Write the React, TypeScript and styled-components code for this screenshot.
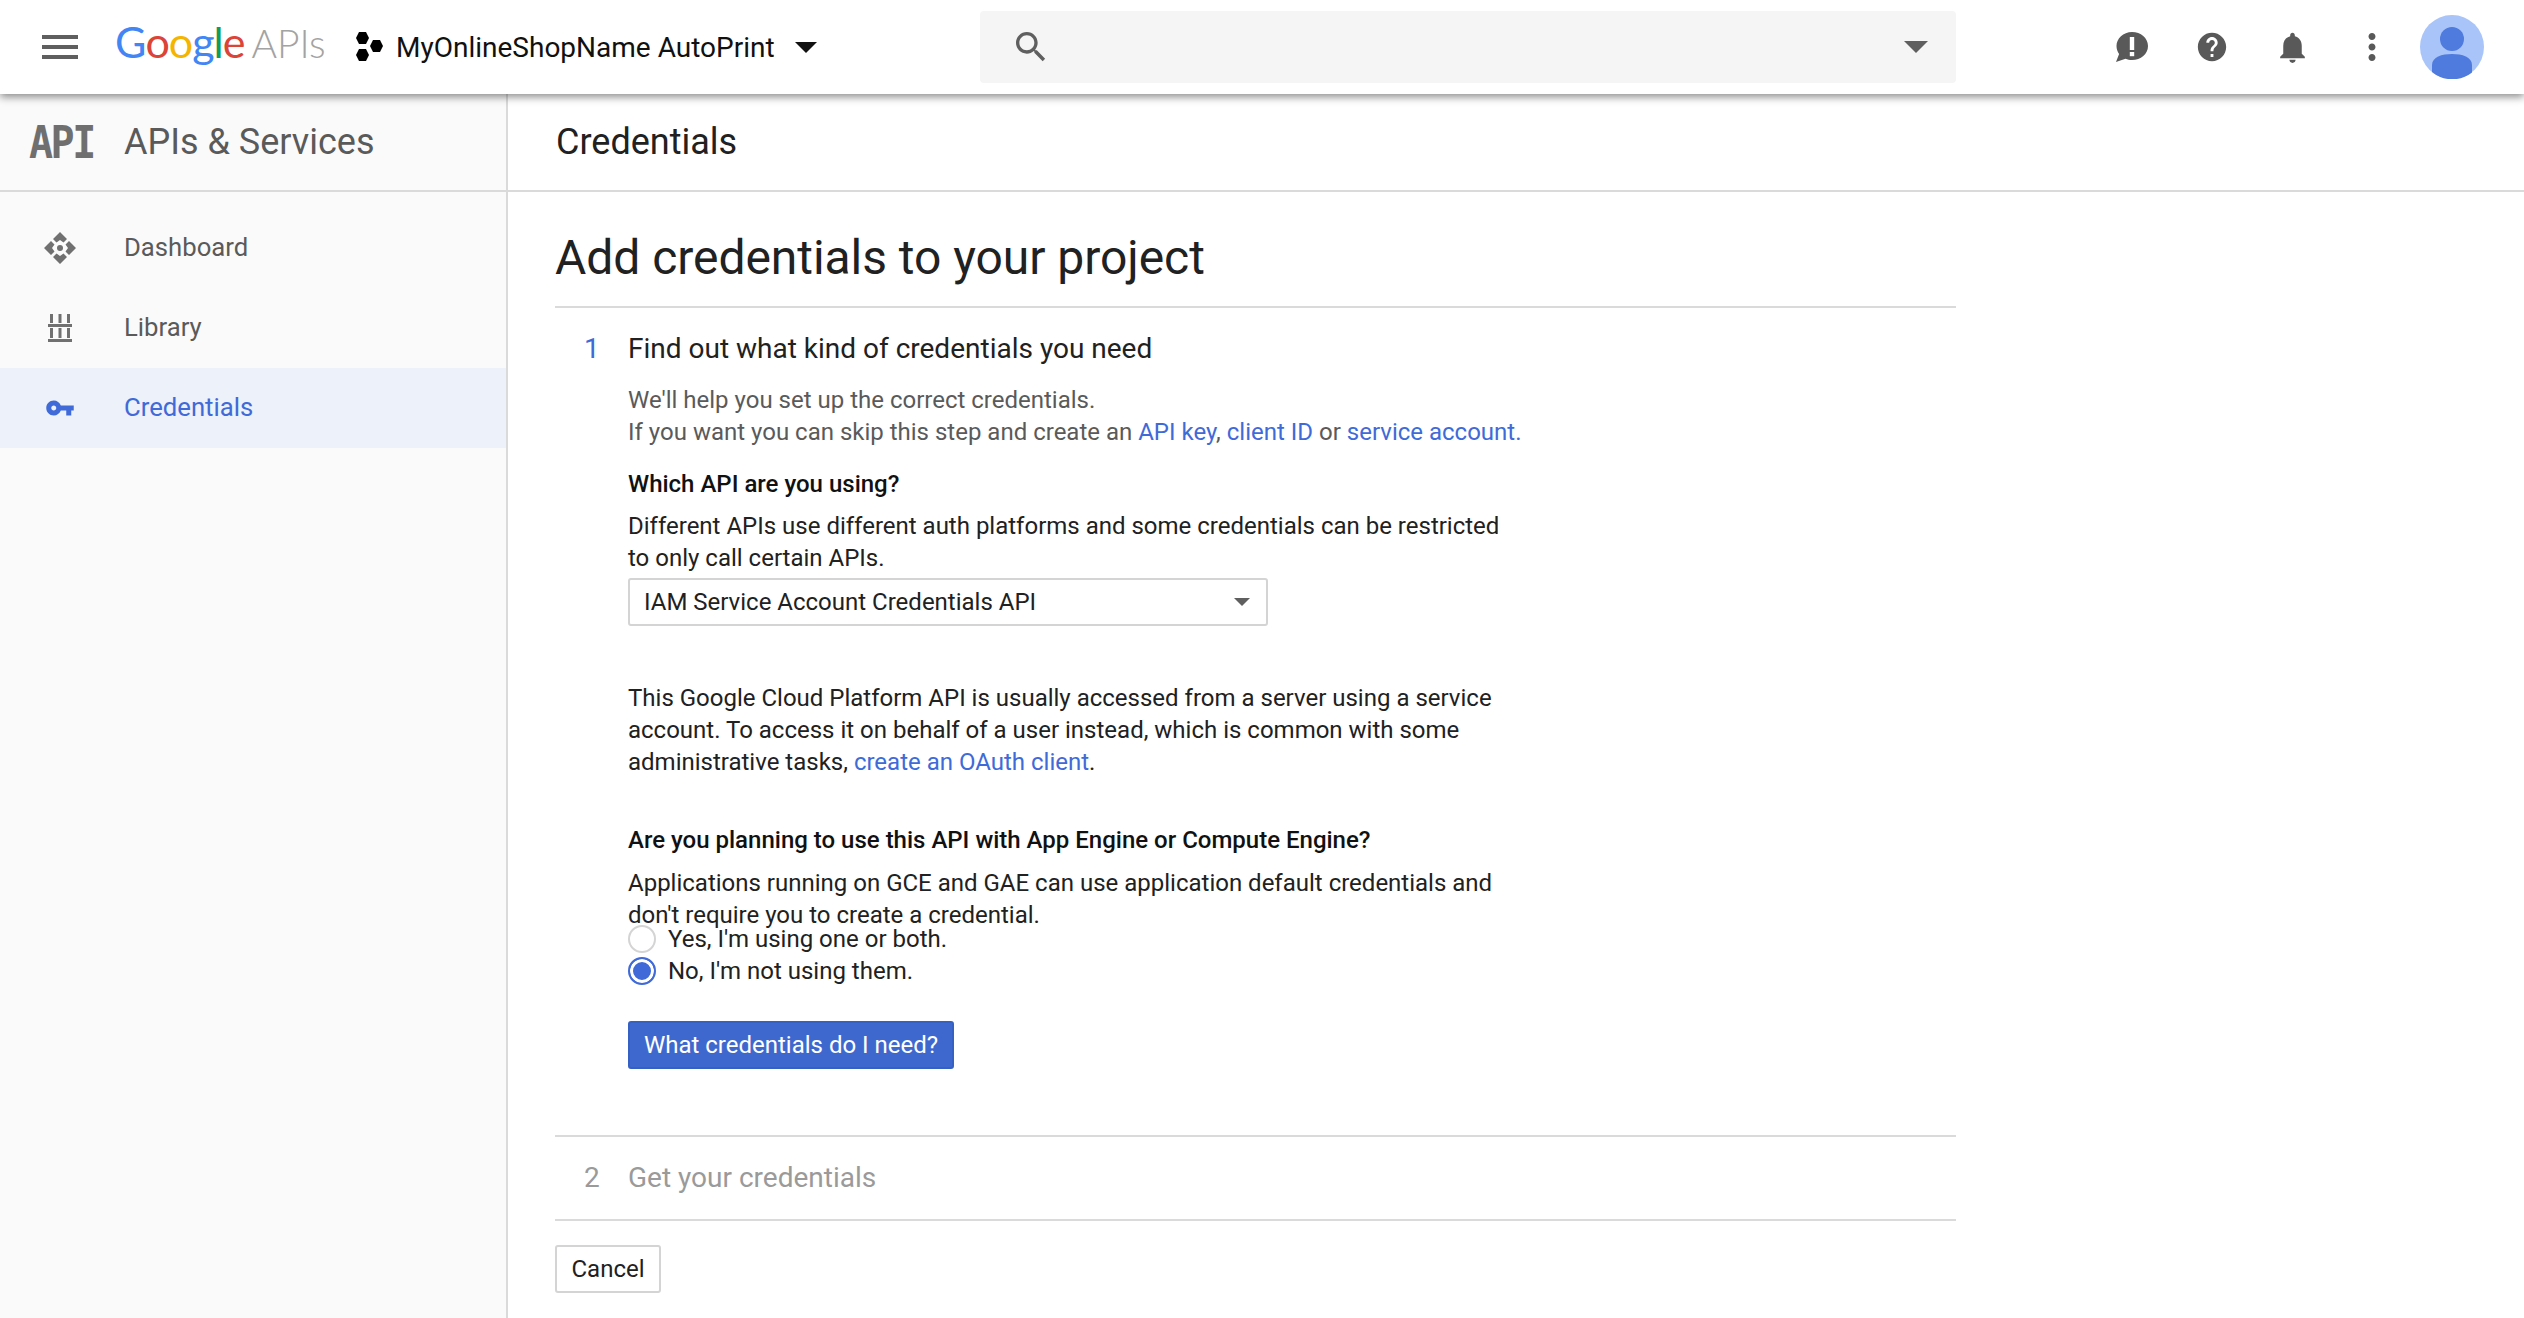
import React from 'react';
import styled, { createGlobalStyle } from 'styled-components';

const GlobalStyle = createGlobalStyle`
  html, body {
    margin: 0;
    padding: 0;
    background: #fff;
  }
  body {
    font-family: Roboto, "Liberation Sans", sans-serif;
    color: #212121;
    overflow: hidden;
  }
`;

const Page = styled.div`
  width: 2524px;
  height: 1318px;
  overflow: hidden;
  display: flex;
  flex-direction: column;
`;

const Header = styled.header`
  position: relative;
  z-index: 2;
  height: 94px;
  flex: none;
  display: flex;
  align-items: center;
  background: #fff;
  box-shadow: 0 3px 8px rgba(0, 0, 0, 0.45);
`;

const MenuButton = styled.div`
  width: 48px;
  height: 48px;
  margin-left: 36px;
  display: flex;
  color: #5f5f5f;
`;

const Logo = styled.div`
  margin-left: 31px;
  width: 229px;
  display: flex;
  align-items: baseline;
  font-family: Lato, "Open Sans", sans-serif;
  font-size: 43px;
  line-height: 60px;
  letter-spacing: -1px;
  margin-top: -10px;
`;

const LogoLetter = styled.span<{ $color: string }>`
  color: ${(p) => p.$color};
`;

const LogoApis = styled.span`
  margin-left: 7px;
  color: #a3a3a3;
  font-size: 39px;
  letter-spacing: 0;
  font-weight: 300;
`;

const ProjectIcon = styled.svg`
  margin-left: 11px;
  width: 28px;
  height: 30px;
  flex: none;
`;

const ProjectName = styled.div`
  margin-left: 13px;
  width: 399px;
  font-size: 28px;
  color: #111;
  white-space: nowrap;
`;

const Caret = styled.div<{ $size: number; $color: string }>`
  width: 0;
  height: 0;
  flex: none;
  border-left: ${(p) => p.$size}px solid transparent;
  border-right: ${(p) => p.$size}px solid transparent;
  border-top: ${(p) => p.$size}px solid ${(p) => p.$color};
`;

const Search = styled.div`
  margin-left: 163px;
  width: 976px;
  height: 72px;
  flex: none;
  box-sizing: border-box;
  padding: 0 28px 0 31px;
  display: flex;
  align-items: center;
  justify-content: space-between;
  background: #f5f5f5;
  border-radius: 4px;
  color: #5f5f5f;
`;

const ActionBar = styled.div`
  margin-left: 136px;
  display: flex;
  align-items: center;
  color: #595959;
`;

const ActionSlot = styled.div`
  width: 80px;
  height: 64px;
  display: flex;
  align-items: center;
  justify-content: center;
`;

const Avatar = styled.svg`
  margin-left: 8px;
  width: 64px;
  height: 64px;
  flex: none;
`;

const Body = styled.div`
  flex: 1;
  display: grid;
  grid-template-columns: 508px 1fr;
  min-height: 0;
`;

const Sidebar = styled.aside`
  background: #fafafa;
  border-right: 2px solid #dadada;
`;

const TitleBar = styled.div<{ $inset: number }>`
  height: 96px;
  display: flex;
  align-items: center;
  padding-left: ${(p) => p.$inset}px;
  border-bottom: 2px solid #dadada;
`;

const ApiMark = styled.span`
  width: 95px;
  font-family: "DejaVu Sans Mono", "Liberation Mono", monospace;
  font-weight: 700;
  font-size: 40px;
  letter-spacing: -2.5px;
  color: #6f6f6f;
  transform: scaleY(1.12);
  transform-origin: left center;
`;

const SidebarTitle = styled.div`
  font-size: 36px;
  color: #5a5a5a;
  white-space: nowrap;
`;

const PageTitle = styled.div`
  font-size: 36px;
  color: #212121;
`;

const NavList = styled.nav`
  padding-top: 16px;
`;

const NavItem = styled.div<{ $active?: boolean }>`
  height: 80px;
  display: flex;
  align-items: center;
  background: ${(p) => (p.$active ? '#ecf1fa' : 'transparent')};
  color: ${(p) => (p.$active ? '#3f6ad8' : '#5a5a5a')};
  font-size: 25.7px;
`;

const NavIcon = styled.div<{ $muted?: boolean }>`
  width: 124px;
  flex: none;
  display: flex;
  justify-content: center;
  padding-right: 4px;
  box-sizing: border-box;
  color: ${(p) => (p.$muted ? '#707070' : 'inherit')};
`;

const NavLabel = styled.span`
  margin-top: -2px;
`;

const Main = styled.main`
  min-width: 0;
`;

const Content = styled.div`
  margin-left: 47px;
  width: 1401px;
`;

const Heading = styled.h1`
  margin: 0;
  padding: 34px 0 16px;
  font-size: 48px;
  line-height: 64px;
  font-weight: 400;
  letter-spacing: -0.05px;
  color: #212121;
  border-bottom: 2px solid #dadada;
`;

const StepHeader = styled.div<{ $disabled?: boolean }>`
  display: flex;
  font-size: 28px;
  line-height: 42px;
  color: ${(p) => (p.$disabled ? '#9a9a9a' : '#212121')};
`;

const StepNumber = styled.span<{ $disabled?: boolean }>`
  width: 73px;
  box-sizing: border-box;
  padding-left: 29px;
  color: ${(p) => (p.$disabled ? '#9a9a9a' : '#3f6ad8')};
`;

const ActiveStep = styled.section`
  padding: 20px 0 66px;
  border-bottom: 2px solid #dadada;
`;

const PendingStep = styled.section`
  padding: 20px 0 20px;
  border-bottom: 2px solid #dadada;
`;

const StepBody = styled.div`
  padding-left: 73px;
  width: 960px;
`;

const Copy = styled.p<{ $top: number; $muted?: boolean }>`
  margin: ${(p) => p.$top}px 0 0;
  font-size: 24px;
  line-height: 32px;
  color: ${(p) => (p.$muted ? '#5a5a5a' : '#212121')};
`;

const Question = styled.p<{ $top: number }>`
  margin: ${(p) => p.$top}px 0 0;
  font-size: 24px;
  line-height: 32px;
  font-weight: 500;
  color: #111;
`;

const Link = styled.a`
  color: #3f6ad8;
  text-decoration: none;
`;

const Select = styled.div`
  margin-top: 4px;
  width: 640px;
  height: 48px;
  box-sizing: border-box;
  padding: 0 16px 0 14px;
  display: flex;
  align-items: center;
  justify-content: space-between;
  border: 2px solid #d4d4d4;
  border-radius: 3px;
  background: #fff;
  font-size: 24px;
  color: #212121;
`;

const RadioGroup = styled.div`
  margin-top: -8px;
`;

const RadioRow = styled.label`
  height: 32px;
  display: flex;
  align-items: center;
  font-size: 24px;
  color: #212121;
`;

const RadioMark = styled.span<{ $checked?: boolean }>`
  width: 28px;
  height: 28px;
  margin-right: 12px;
  flex: none;
  box-sizing: border-box;
  border-radius: 50%;
  border: 2px solid ${(p) => (p.$checked ? '#3f6ad8' : '#d4d4d4')};
  background: ${(p) => (p.$checked ? '#3f6ad8' : '#fff')};
  box-shadow: ${(p) => (p.$checked ? 'inset 0 0 0 3px #fff' : 'none')};
`;

const PrimaryButton = styled.button`
  display: block;
  margin-top: 34px;
  height: 48px;
  width: 326px;
  padding: 0;
  border: 2px solid #3560c4;
  border-radius: 3px;
  background: #3f68cf;
  color: #fff;
  font-family: inherit;
  font-size: 24px;
`;

const CancelButton = styled.button`
  display: block;
  margin-top: 24px;
  height: 48px;
  width: 106px;
  padding: 0;
  border: 2px solid #d4d4d4;
  border-radius: 3px;
  background: #fff;
  color: #212121;
  font-family: inherit;
  font-size: 24px;
`;

const googleLetters: [string, string][] = [
  ['G', '#4285f4'],
  ['o', '#db4437'],
  ['o', '#f4b400'],
  ['g', '#4285f4'],
  ['l', '#0f9d58'],
  ['e', '#db4437'],
];

function Icon({ d, size, color }: { d: string; size: number; color?: string }) {
  return (
    <svg width={size} height={size} viewBox="0 0 24 24" fill={color || 'currentColor'}>
      <path d={d} />
    </svg>
  );
}

const paths = {
  menu: 'M3 18h18v-2H3v2zm0-5h18v-2H3v2zm0-7v2h18V6H3z',
  search:
    'M15.5 14h-.79l-.28-.27C15.41 12.59 16 11.11 16 9.5 16 5.91 13.09 3 9.5 3S3 5.91 3 9.5 5.91 16 9.5 16c1.61 0 3.09-.59 4.23-1.57l.27.28v.79l5 4.99L20.49 19l-4.99-5zm-6 0C7.01 14 5 11.99 5 9.5S7.01 5 9.5 5 14 7.01 14 9.5 11.99 14 9.5 14z',
  help: 'M12 2C6.48 2 2 6.48 2 12s4.48 10 10 10 10-4.48 10-10S17.52 2 12 2zm1 17h-2v-2h2v2zm2.07-7.75l-.9.92C13.45 12.9 13 13.5 13 15h-2v-.5c0-1.1.45-2.1 1.17-2.83l1.24-1.26c.37-.36.59-.86.59-1.41 0-1.1-.9-2-2-2s-2 .9-2 2H8c0-2.21 1.79-4 4-4s4 1.79 4 4c0 .88-.36 1.68-.93 2.25z',
  bell: 'M12 22c1.1 0 2-.9 2-2h-4c0 1.1.89 2 2 2zm6-6v-5c0-3.07-1.64-5.64-4.5-6.32V4c0-.83-.67-1.5-1.5-1.5s-1.5.67-1.5 1.5v.68C7.63 5.36 6 7.92 6 11v5l-2 2v1h16v-1l-2-2z',
  more: 'M12 8c1.1 0 2-.9 2-2s-.9-2-2-2-2 .9-2 2 .9 2 2 2zm0 2c-1.1 0-2 .9-2 2s.9 2 2 2 2-.9 2-2-.9-2-2-2zm0 6c-1.1 0-2 .9-2 2s.9 2 2 2 2-.9 2-2-.9-2-2-2z',
  key: 'M12.65 10C11.83 7.67 9.61 6 7 6c-3.31 0-6 2.69-6 6s2.69 6 6 6c2.61 0 4.83-1.67 5.65-4H17v4h4v-4h2v-4H12.65zM7 14c-1.1 0-2-.9-2-2s.9-2 2-2 2 .9 2 2-.9 2-2 2z',
};

function FeedbackIcon() {
  return (
    <svg width="34" height="32" viewBox="0 0 34 32">
      <path
        fill="currentColor"
        d="M17 1C8.2 1 1.5 7.5 1.5 15c0 3 1 5.700 2.600 8L1 31l9.500-3.200c2 .9 4.200 1.200 6.500 1.200 8.800 0 16-6 16-14S25.800 1 17 1z"
      />
      <rect x="14.800" y="6" width="4.400" height="13" fill="#fff" />
      <rect x="14.800" y="21" width="4.400" height="4.200" fill="#fff" />
    </svg>
  );
}

function DashboardIcon() {
  return (
    <svg width="32" height="32" viewBox="0 0 32 32" fill="currentColor">
      <path d="M16 0l7 7-3.500 3.500L16 8l-3.500 2.500L9 7z" />
      <path d="M16 32l-7-7 3.500-3.500L16 24l3.500-2.500L23 25z" />
      <path d="M0 16l7-7 3.500 3.500L8 16l2.500 3.500L7 23z" />
      <path d="M32 16l-7 7-3.500-3.500L24 16l-2.500-3.500L25 9z" />
      <circle cx="16" cy="16" r="3" />
    </svg>
  );
}

function LibraryIcon() {
  return (
    <svg width="24" height="28" viewBox="0 0 24 28" fill="currentColor">
      <rect x="2" y="0" width="3" height="9" />
      <rect x="10.500" y="0" width="3" height="9" />
      <rect x="19" y="0" width="3" height="9" />
      <rect x="0" y="10" width="24" height="3" />
      <rect x="2" y="14" width="3" height="10" />
      <rect x="10.500" y="14" width="3" height="10" />
      <rect x="19" y="14" width="3" height="10" />
      <rect x="0" y="25" width="24" height="3" />
    </svg>
  );
}

export default function App() {
  return (
    <>
      <GlobalStyle />
      <Page>
        <Header>
          <MenuButton>
            <Icon d={paths.menu} size={48} />
          </MenuButton>
          <Logo>
            {googleLetters.map(([letter, color], i) => (
              <LogoLetter key={i} $color={color}>
                {letter}
              </LogoLetter>
            ))}
            <LogoApis>APIs</LogoApis>
          </Logo>
          <ProjectIcon viewBox="0 0 28 30" fill="#000">
            <polygon points="7,0 14,0 17,6 14,12 7,12 4,6" transform="translate(-3,0)" />
            <polygon points="7,0 14,0 17,6 14,12 7,12 4,6" transform="translate(11,8)" />
            <polygon points="7,0 14,0 17,6 14,12 7,12 4,6" transform="translate(-3,17)" />
          </ProjectIcon>
          <ProjectName>MyOnlineShopName AutoPrint</ProjectName>
          <Caret $size={11.5} $color="#111" />
          <Search>
            <Icon d={paths.search} size={40} />
            <Caret $size={12} $color="#5f5f5f" />
          </Search>
          <ActionBar>
            <ActionSlot>
              <FeedbackIcon />
            </ActionSlot>
            <ActionSlot>
              <Icon d={paths.help} size={34} />
            </ActionSlot>
            <ActionSlot>
              <Icon d={paths.bell} size={37} />
            </ActionSlot>
            <ActionSlot>
              <Icon d={paths.more} size={42} />
            </ActionSlot>
          </ActionBar>
          <Avatar viewBox="0 0 64 64">
            <circle cx="32" cy="32" r="32" fill="#a8c4f9" />
            <ellipse cx="32" cy="24" rx="12" ry="12" fill="#4f7ade" />
            <path
              d="M12 50c0-8 10-11 20-11s20 3 20 11v7.500A32 32 0 0 1 12 57z"
              fill="#4f7ade"
            />
          </Avatar>
        </Header>
        <Body>
          <Sidebar>
            <TitleBar $inset={29}>
              <ApiMark>API</ApiMark>
              <SidebarTitle>APIs &amp; Services</SidebarTitle>
            </TitleBar>
            <NavList>
              <NavItem>
                <NavIcon $muted>
                  <DashboardIcon />
                </NavIcon>
                <NavLabel>Dashboard</NavLabel>
              </NavItem>
              <NavItem>
                <NavIcon $muted>
                  <LibraryIcon />
                </NavIcon>
                <NavLabel>Library</NavLabel>
              </NavItem>
              <NavItem $active>
                <NavIcon>
                  <Icon d={paths.key} size={30} />
                </NavIcon>
                <NavLabel>Credentials</NavLabel>
              </NavItem>
            </NavList>
          </Sidebar>
          <Main>
            <TitleBar $inset={48}>
              <PageTitle>Credentials</PageTitle>
            </TitleBar>
            <Content>
              <Heading>Add credentials to your project</Heading>
              <ActiveStep>
                <StepHeader>
                  <StepNumber>1</StepNumber>
                  Find out what kind of credentials you need
                </StepHeader>
                <StepBody>
                  <Copy $top={14} $muted>
                    We'll help you set up the correct credentials.
                    <br />
                    If you want you can skip this step and create an <Link>API key</Link>,{' '}
                    <Link>client ID</Link> or <Link>service account</Link>
                    <Link>.</Link>
                  </Copy>
                  <Question $top={20}>Which API are you using?</Question>
                  <Copy $top={10}>
                    Different APIs use different auth platforms and some credentials can be restricted
                    <br />
                    to only call certain APIs.
                  </Copy>
                  <Select>
                    IAM Service Account Credentials API
                    <Caret $size={8} $color="#5f5f5f" />
                  </Select>
                  <Copy $top={56}>
                    This Google Cloud Platform API is usually accessed from a server using a service
                    <br />
                    account. To access it on behalf of a user instead, which is common with some
                    <br />
                    administrative tasks, <Link>create an OAuth client</Link>.
                  </Copy>
                  <Question $top={46}>Are you planning to use this API with App Engine or Compute Engine?</Question>
                  <Copy $top={11}>
                    Applications running on GCE and GAE can use application default credentials and
                    <br />
                    don't require you to create a credential.
                  </Copy>
                  <RadioGroup>
                    <RadioRow>
                      <RadioMark />
                      Yes, I'm using one or both.
                    </RadioRow>
                    <RadioRow>
                      <RadioMark $checked />
                      No, I'm not using them.
                    </RadioRow>
                  </RadioGroup>
                  <PrimaryButton>What credentials do I need?</PrimaryButton>
                </StepBody>
              </ActiveStep>
              <PendingStep>
                <StepHeader $disabled>
                  <StepNumber $disabled>2</StepNumber>
                  Get your credentials
                </StepHeader>
              </PendingStep>
              <CancelButton>Cancel</CancelButton>
            </Content>
          </Main>
        </Body>
      </Page>
    </>
  );
}
